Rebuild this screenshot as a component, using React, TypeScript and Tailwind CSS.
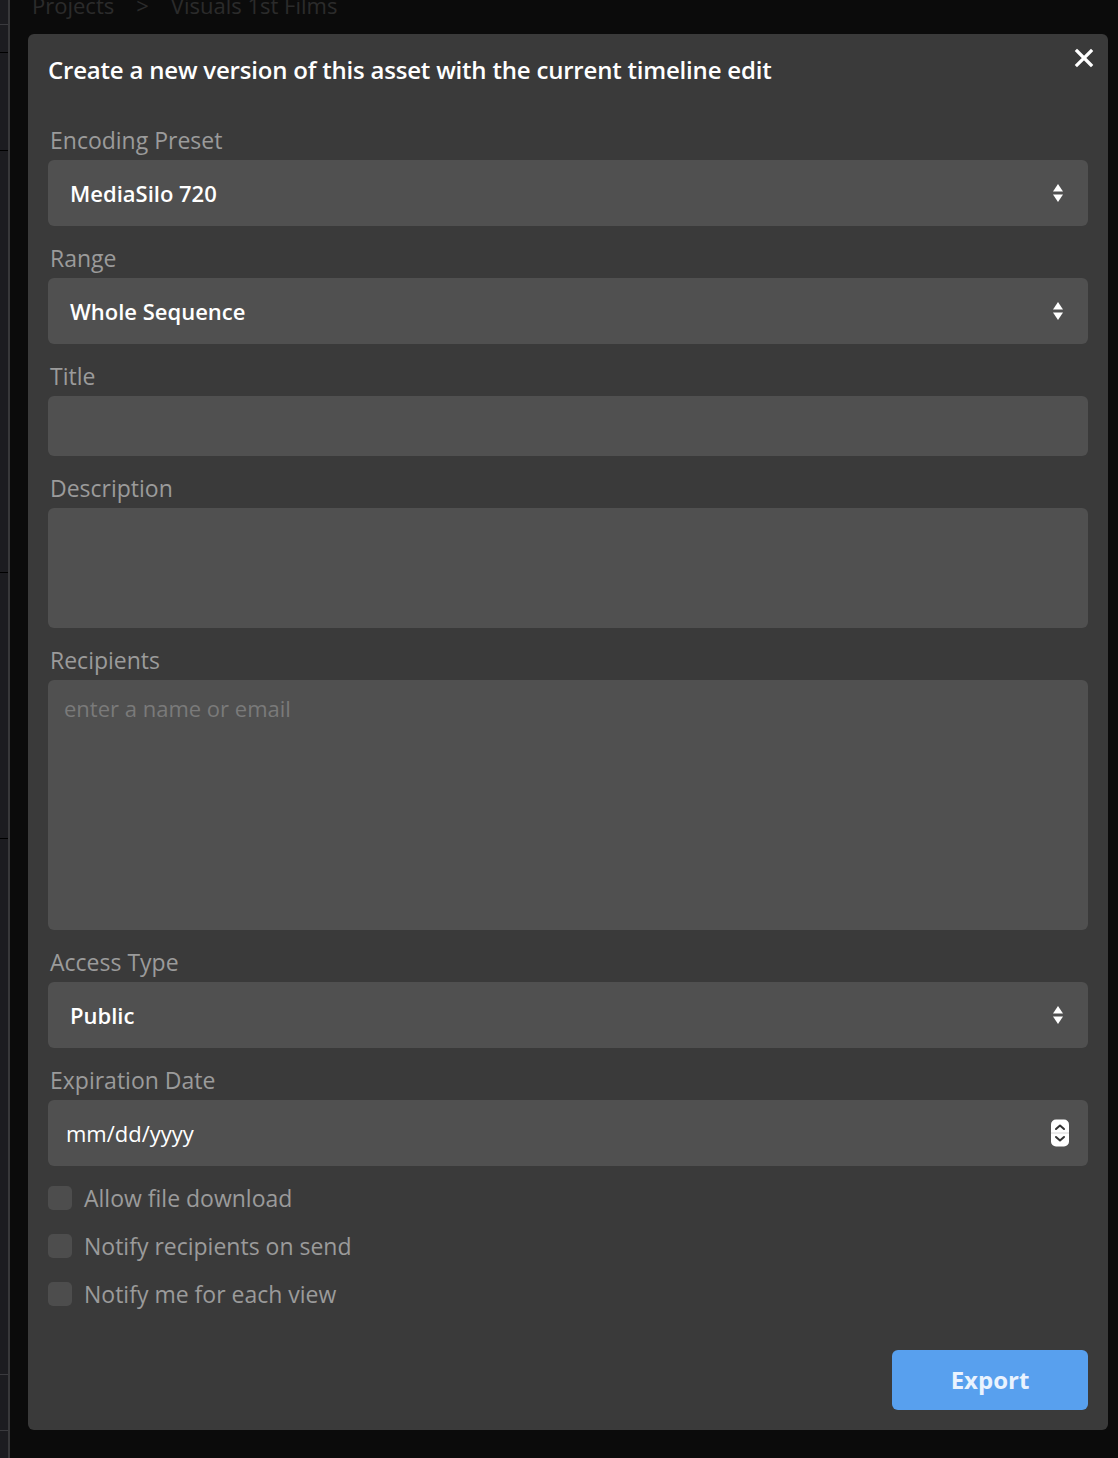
import React from 'react';

function SelectArrows() {
  return (
    <svg width="12" height="22" viewBox="0 0 12 22" className="shrink-0">
      <path d="M6 2 L11 9.5 L1 9.5 Z" fill="#ffffff" />
      <path d="M6 20 L11 12.5 L1 12.5 Z" fill="#ffffff" />
    </svg>
  );
}

function DateSpinner() {
  return (
    <svg width="20" height="28" viewBox="0 0 20 28" className="shrink-0">
      <rect x="1" y="0.5" width="18" height="27" rx="5" fill="#ffffff" />
      <line x1="1" y1="14" x2="19" y2="14" stroke="#d6d6d6" strokeWidth="1" />
      <path d="M6 10 L10 6.5 L14 10" stroke="#333" strokeWidth="2" fill="none" strokeLinecap="round" strokeLinejoin="round" />
      <path d="M6 18 L10 21.5 L14 18" stroke="#333" strokeWidth="2" fill="none" strokeLinecap="round" strokeLinejoin="round" />
    </svg>
  );
}

function Field({ label, children }: { label: string; children: React.ReactNode }) {
  return (
    <div className="pt-[18px]">
      <div className="mb-[6px] pl-[2px] text-[23px] leading-[28px] text-[#9b9b9b]">{label}</div>
      {children}
    </div>
  );
}

function Select({ value }: { value: string }) {
  return (
    <div className="flex h-[66px] items-center justify-between rounded-md bg-[#505050] pl-[22px] pr-[24px]">
      <span className="text-[22px] font-semibold text-white">{value}</span>
      <SelectArrows />
    </div>
  );
}

function Check({ label }: { label: string }) {
  return (
    <label className="flex h-[28px] items-center gap-3">
      <span className="h-6 w-6 rounded-[5px] bg-[#4d4d4d]" />
      <span className="text-[23px] leading-[28px] text-[#9b9b9b]">{label}</span>
    </label>
  );
}

export default function App() {
  return (
    <div
      className="relative flex h-[1458px] w-[1118px] overflow-hidden bg-[#0b0b0b]"
      style={{ fontFamily: '"Open Sans", Lato, sans-serif' }}
    >
      {/* sidebar sliver */}
      <div className="flex w-[8px] flex-col bg-[#1c1c20]">
        <div className="h-[24px]" />
        <div className="h-px bg-[#3a3a3e]" />
        <div className="h-[27px]" />
        <div className="h-px bg-black" />
        <div className="h-[97px]" />
        <div className="h-px bg-black" />
        <div className="h-[421px]" />
        <div className="h-px bg-black" />
        <div className="h-[265px]" />
        <div className="h-px bg-black" />
        <div className="h-[535px]" />
        <div className="h-px bg-[#3a3a3e]" />
        <div className="h-[55px]" />
        <div className="h-px bg-[#3a3a3e]" />
      </div>
      <div className="w-[2px] bg-[#38383a]" />

      <div className="flex-1 pl-[18px] pr-[10px]">
        {/* breadcrumb behind the dialog */}
        <div className="-mt-[10px] flex h-[44px] items-start gap-[22px] pl-[4px] text-[22px] leading-[30px] text-[#2b2b2b]">
          <span>Projects</span>
          <span>&gt;</span>
          <span>Visuals 1st Films</span>
        </div>

        <div className="relative rounded-md bg-[#3a3a3a] px-5 pb-5 pt-5">
          <button className="absolute right-[14px] top-[14px] text-white">
            <svg width="20" height="20" viewBox="0 0 20 20">
              <path d="M3 3 L17 17 M17 3 L3 17" stroke="#fff" strokeWidth="3.2" strokeLinecap="square" />
            </svg>
          </button>
          <h1 className="text-[24px] font-semibold leading-[32px] tracking-[-0.2px] text-white">
            Create a new version of this asset with the current timeline edit
          </h1>

          <div className="mt-[22px]">
            <Field label="Encoding Preset">
              <Select value="MediaSilo 720" />
            </Field>
            <Field label="Range">
              <Select value="Whole Sequence" />
            </Field>
            <Field label="Title">
              <div className="h-[60px] rounded-md bg-[#505050]" />
            </Field>
            <Field label="Description">
              <div className="h-[120px] rounded-md bg-[#505050]" />
            </Field>
            <Field label="Recipients">
              <div className="h-[250px] rounded-md bg-[#505050] px-4 pt-[14px]">
                <span className="text-[22px] leading-[28px] text-[#7a7a7a]">enter a name or email</span>
              </div>
            </Field>
            <Field label="Access Type">
              <Select value="Public" />
            </Field>
            <Field label="Expiration Date">
              <div className="flex h-[66px] items-center justify-between rounded-md bg-[#505050] pl-[18px] pr-[18px]">
                <span className="text-[22px] font-medium text-white">mm/dd/yyyy</span>
                <DateSpinner />
              </div>
            </Field>
          </div>

          <div className="mt-[18px] flex flex-col gap-5">
            <Check label="Allow file download" />
            <Check label="Notify recipients on send" />
            <Check label="Notify me for each view" />
          </div>

          <div className="mt-[42px] flex justify-end">
            <button className="h-[60px] w-[196px] rounded-md bg-[#58a0ee] text-[24px] font-bold text-[#eaf3fe]">
              Export
            </button>
          </div>
        </div>
      </div>
    </div>
  );
}
